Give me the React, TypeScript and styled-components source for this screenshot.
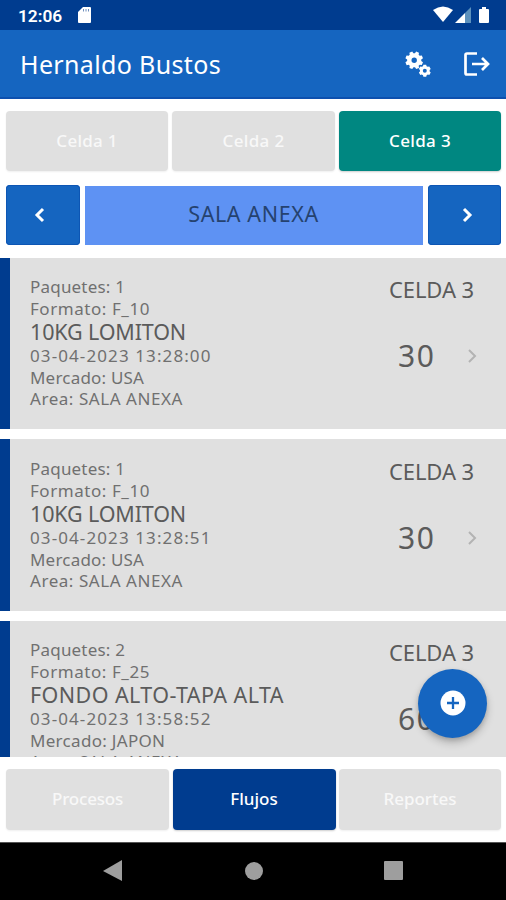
import React from "react";
import styled, { createGlobalStyle } from "styled-components";

const Global = createGlobalStyle`
  *{box-sizing:border-box}
  body{margin:0;background:#fff;overflow:hidden;font-family:"Noto Sans","Open Sans",sans-serif}
  button{font:inherit;border:0;padding:0}
  svg{display:block}
`;
const Screen = styled.div`width:506px;height:900px;display:flex;flex-direction:column;background:#fff;`;
const StatusBar = styled.div`
  height:30px;flex:none;background:#003c8f;color:#fff;display:flex;align-items:center;padding:0 15px 0 18px;
  font:600 17.3px Roboto,sans-serif;
`;
const Clock = styled.span`width:60px;padding-top:2px;white-space:nowrap;`;
const Spacer = styled.div`flex:1;`;
const AppBar = styled.header`
  height:69px;flex:none;background:#1565c0;border-bottom:2px solid #0d50ae;display:flex;align-items:center;padding:0 16px 0 20px;color:#fff;
`;
const Text = styled.span<{ $size: number; $gap?: number; $line?: number; $color?: string }>`
  font-size:${p => p.$size}px;letter-spacing:${p => p.$gap ?? 0}px;line-height:${p => p.$line ?? 22}px;
  color:${p => p.$color ?? "inherit"};white-space:pre;
`;
const IconButton = styled.button`background:none;color:#fff;margin-left:33px;`;
const Tabs = styled.nav`display:grid;grid-template-columns:162px 163px 162px;gap:4px;padding:0 5px 0 6px;flex:none;`;
const CellTabs = styled(Tabs)`margin-top:12px;height:60px;`;
const BottomTabs = styled(Tabs)`margin-top:12px;height:61px;grid-template-columns:163px 163px 162px;gap:4px 3.5px;`;
const Tab = styled.button<{ $bg?: string }>`
  background:${p => p.$bg ?? "#e0e0e0"};color:${p => (p.$bg ? "#fff" : "#f8f8f8")};border-radius:4px;
  font-weight:500;padding-bottom:1px;box-shadow:0 1px 2px ${p => (p.$bg ? "#0003" : "#0001")};
`;
const RoomRow = styled.div`
  display:grid;grid-template-columns:73.5px 338px 73.5px;gap:5px;padding:0 5px 0 6px;height:60px;margin-top:14px;flex:none;
`;
const Arrow = styled.button<{ $shift: number }>`
  background:#1565c0;border-radius:4px;display:flex;align-items:center;padding-left:${p => p.$shift}px;
  color:#fff;box-shadow:inset 0 0 0 1px #0d56b4;
`;
const Room = styled.div`background:#5e92f3;color:#25426f;display:grid;place-items:center;height:59px;margin-top:1px;padding-bottom:3px;`;
const List = styled.main`margin-top:12.5px;height:499.5px;overflow:hidden;flex:none;display:flex;flex-direction:column;gap:10px;`;
const Card = styled.article`
  height:171.5px;flex:none;background:#e0e0e0;border-left:10px solid #003c8f;display:flex;
  justify-content:space-between;padding:18.5px 24px 0 20px;color:#707070;
`;
const Details = styled.div`display:flex;flex-direction:column;align-items:flex-start;`;
const Summary = styled.div`display:flex;flex-direction:column;color:#5b5b5b;width:93px;`;
const Amount = styled.div`display:flex;align-items:center;justify-content:space-between;padding:0 4px 0 9px;margin-top:33px;height:42px;`;
const Fab = styled.button`
  position:absolute;left:418px;top:668.5px;width:69px;height:69px;border-radius:50%;background:#1565c0;
  display:grid;place-items:center;box-shadow:0 5px 8px #0003,0 2px 4px #0002;
`;
const NavBar = styled.footer`
  margin-top:auto;height:58.5px;background:#000;border-top:1px solid #555;display:flex;justify-content:space-between;
  align-items:center;padding:0 102px 0 103px;flex:none;
`;

const Chevron = ({ left, color = "#fff", w = 3 }: { left?: boolean; color?: string; w?: number }) => (
  <svg width="12" height="16" viewBox="0 0 12 16" fill="none" stroke={color} strokeWidth={w}>
    <path d={left ? "M9 2 3 8l6 6" : "m3 2 6 6-6 6"} />
  </svg>
);

function gear(cx: number, cy: number, r: number, hole: number, teeth: number, turn: number) {
  const pts: string[] = [];
  for (let i = 0; i < teeth; i++) {
    const a = turn + (i * 2 * Math.PI) / teeth;
    const step = (2 * Math.PI) / teeth;
    [[-0.36, 0.79], [-0.22, 1], [0.22, 1], [0.36, 0.79]].forEach(([o, k]) =>
      pts.push(`${(cx + r * k * Math.cos(a + o * step)).toFixed(2)} ${(cy + r * k * Math.sin(a + o * step)).toFixed(2)}`));
  }
  return `M${pts.join("L")}ZM${cx - hole} ${cy}a${hole} ${hole} 0 1 0 ${2 * hole} 0a${hole} ${hole} 0 1 0 ${-2 * hole} 0Z`;
}

const items = [
  { packs: 1, format: "F_10", name: "10KG LOMITON", gap: -0.15, date: "03-04-2023 13:28:00", market: "USA", qty: 30 },
  { packs: 1, format: "F_10", name: "10KG LOMITON", gap: -0.15, date: "03-04-2023 13:28:51", market: "USA", qty: 30 },
  { packs: 2, format: "F_25", name: "FONDO ALTO-TAPA ALTA", gap: 0.42, date: "03-04-2023 13:58:52", market: "JAPON", qty: 60 },
];

export default function App() {
  return (
    <Screen>
      <Global />
      <StatusBar>
        <Clock>12:06</Clock>
        <svg width="13" height="16" viewBox="0 0 13 16"><path fill="#fff" d="M5 0h7q1 0 1 1v14q0 1-1 1H1q-1 0-1-1V5Z" /><path stroke="#6f8fbd" strokeWidth="1" d="M5.500 2v2.500M8 2v2.500M10.500 2v2.500" /></svg>
        <Spacer />
        <svg width="58" height="18" viewBox="0 0 58 18">
          <path fill="#fff" d="M0 4q10-7 20 0L10 16Z" />
          <path fill="#fff" d="M22 17 32 7v10Z" /><path fill="#5c91bd" d="m32 7 6-6v16h-6Z" />
          <path fill="#fff" d="M49 1h4v2h2q1 0 1 1v12q0 1-1 1h-8q-1 0-1-1V4q0-1 1-1h2Z" />
        </svg>
      </StatusBar>
      <AppBar>
        <Text $size={25} $gap={0.36}>Hernaldo Bustos</Text>
        <Spacer />
        <IconButton aria-label="Ajustes">
          <svg width="26" height="26" viewBox="0 0 26 26"><path fill="#fff" fillRule="evenodd" d={gear(9.2, 9.3, 9, 2.7, 8, 0.39) + gear(19.8, 19.7, 6.2, 2, 6, 0.52)} /></svg>
        </IconButton>
        <IconButton aria-label="Salir">
          <svg width="26" height="24" viewBox="0 0 26 24" fill="none" stroke="#fff" strokeWidth="2.7"><path d="M13 1.500H3Q1.500 1.500 1.500 3v18q0 1.500 1.500 1.500h10M8 12h16M18 6l6 6-6 6" /></svg>
        </IconButton>
      </AppBar>
      <CellTabs>
        <Tab><Text $size={17} $gap={0.25}>Celda 1</Text></Tab>
        <Tab><Text $size={17} $gap={0.35}>Celda 2</Text></Tab>
        <Tab $bg="#008781"><Text $size={17} $gap={0.35}>Celda 3</Text></Tab>
      </CellTabs>
      <RoomRow>
        <Arrow $shift={28} aria-label="Anterior"><Chevron left /></Arrow>
        <Room><Text $size={21.5} $gap={0.6}>SALA ANEXA</Text></Room>
        <Arrow $shift={33} aria-label="Siguiente"><Chevron /></Arrow>
      </RoomRow>
      <List>
        {items.map(it => (
          <Card key={it.date}>
            <Details>
              <Text $size={17} $gap={0.2}>{`Paquetes: ${it.packs}`}</Text>
              <Text $size={17} $line={21} $gap={0.55}>{`Formato: ${it.format}`}</Text>
              <Text $size={21.5} $line={26} $color="#5b5b5b" $gap={it.gap}>{it.name}</Text>
              <Text $size={17} $gap={1.1}>{it.date}</Text>
              <Text $size={17} $line={21} $gap={it.market === "JAPON" ? 0.3 : 0.2}>{`Mercado: ${it.market}`}</Text>
              <Text $size={17} $line={21} $gap={0.55}>Area: SALA ANEXA</Text>
            </Details>
            <Summary>
              <Text $size={22} $line={26} $gap={-0.1}>CELDA 3</Text>
              <Amount><Text $size={30} $line={42} $gap={1.5}>{it.qty}</Text><Chevron color="#b3b3b3" w={2} /></Amount>
            </Summary>
          </Card>
        ))}
      </List>
      <BottomTabs>
        <Tab><Text $size={17} $gap={-0.2}>Procesos</Text></Tab>
        <Tab $bg="#003c8f"><Text $size={17}>Flujos</Text></Tab>
        <Tab><Text $size={17}>Reportes</Text></Tab>
      </BottomTabs>
      <NavBar>
        <svg width="20" height="22"><path fill="#9e9e9e" d="M0 11 19 0v21Z" /></svg>
        <svg width="18" height="18"><circle cx="9" cy="9" r="9" fill="#9e9e9e" /></svg>
        <svg width="20" height="20"><rect width="19" height="19" rx="1" fill="#9e9e9e" /></svg>
      </NavBar>
      <Fab aria-label="Agregar">
        <svg width="26" height="26"><circle cx="13" cy="13" r="12.5" fill="#fff" /><path stroke="#1565c0" strokeWidth="2.3" d="M13 7v12M7 13h12" /></svg>
      </Fab>
    </Screen>
  );
}
